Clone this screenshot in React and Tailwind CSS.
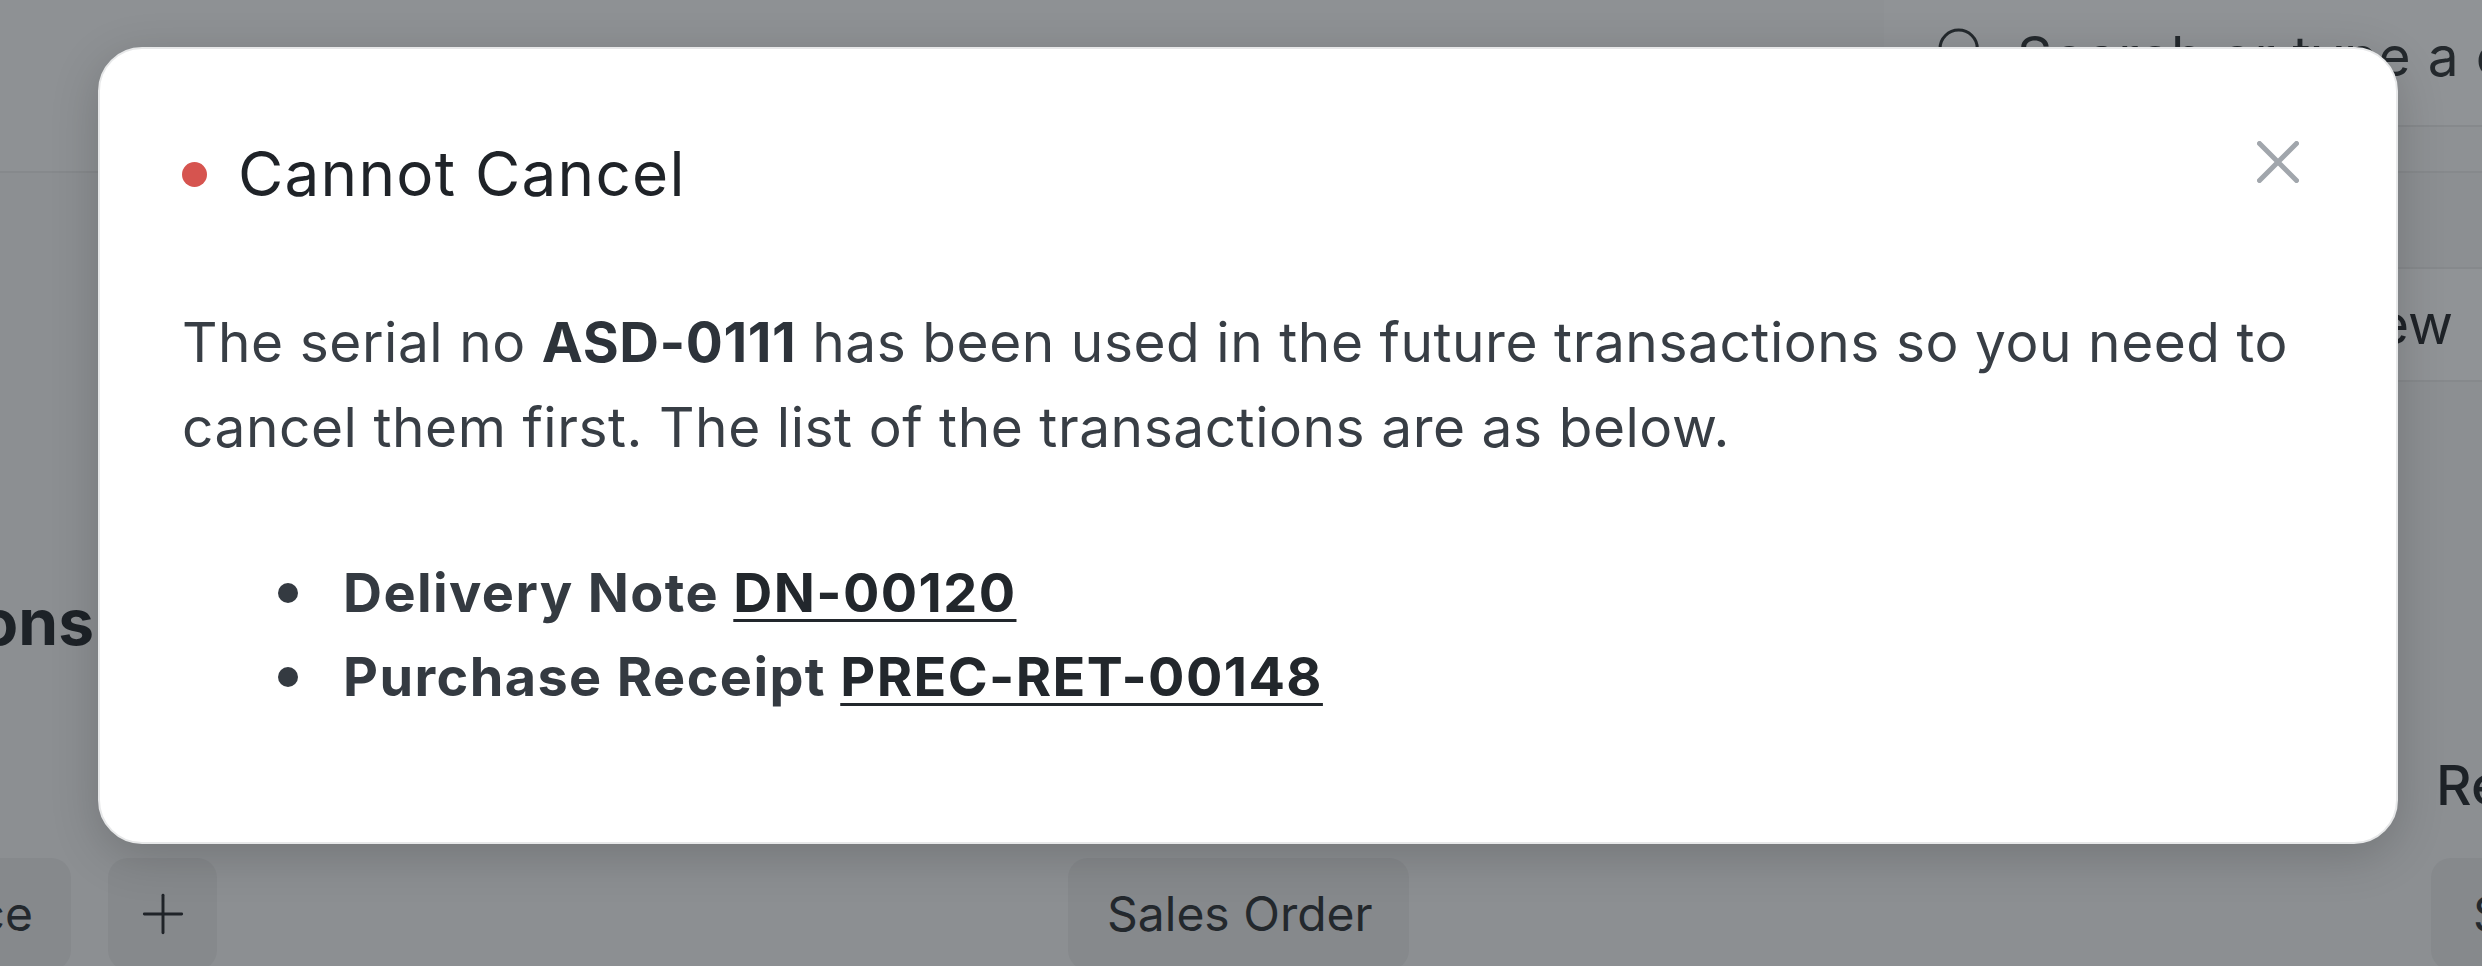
import { Search, Plus } from "lucide-react";

const CloseIcon = () => (
  <svg width="42" height="42" viewBox="0 0 42 42" fill="none">
    <path
      d="M2.5 2.5 39.5 39.5M39.5 2.5 2.5 39.5"
      stroke="#a1a6ac"
      strokeWidth="5"
      strokeLinecap="round"
    />
  </svg>
);

const BgButton = ({ children, className = "" }) => (
  <div
    className={`h-[112px] shrink-0 rounded-[20px] bg-[#86898c] flex items-center text-[48px] text-[#23282d] whitespace-nowrap ${className}`}
  >
    {children}
  </div>
);

const App = () => {
  return (
    <div className="relative h-[966px] w-full overflow-hidden bg-[#8c8f92] font-['Inter','Noto_Sans',sans-serif]">
      {/* page behind the dialog (already dimmed) */}
      <div className="h-[173px] flex justify-end border-b-2 border-[#86898c] bg-[#8e9194]">
        <div className="w-[598px] h-[127px] bg-[#909396] border-b-2 border-[#86898c] flex items-start pt-[23px] pl-[49px] gap-[28px]">
          <Search className="w-[56px] h-[56px] text-[#24292d] shrink-0" strokeWidth={1.3} />
          <span className="text-[55px] leading-[66px] tracking-[0.015em] text-[#24292d] whitespace-nowrap">
            Search or type a command
          </span>
        </div>
      </div>

      <div className="flex justify-end mt-[94px]">
        <div className="w-[240px] h-[115px] rounded-l-[20px] bg-[#909396] border-2 border-r-0 border-[#86898c] flex items-center justify-end pr-[29px] text-[55px] text-[#1f2328]">
          New
        </div>
      </div>

      <div className="grid grid-cols-[1068px_1363px_1fr]">
        {/* left column */}
        <div className="pt-[201px]">
          <div className="w-[94px] overflow-hidden flex justify-end">
            <span className="shrink-0 whitespace-nowrap text-[64px] leading-[77px] font-bold text-[#1d2227]">
              Transactions
            </span>
          </div>
          <div className="flex gap-[37px] mt-[198px]">
            <div className="w-[71px] overflow-hidden flex justify-end">
              <BgButton className="pl-[40px] pr-[38px]">Sales Invoice</BgButton>
            </div>
            <BgButton className="w-[109px] justify-center">
              <Plus className="w-[64px] h-[64px] text-[#1f2328]" strokeWidth={1.1} />
            </BgButton>
          </div>
        </div>

        {/* middle column */}
        <div className="pt-[476px]">
          <BgButton className="w-[341px] pl-[39px]">Sales Order</BgButton>
        </div>

        {/* right column */}
        <div className="pt-[370px] overflow-hidden">
          <div className="whitespace-nowrap text-[55px] leading-[66px] font-medium text-[#1d2227] pl-[5px]">
            Reports
          </div>
          <div className="mt-[40px]">
            <BgButton className="w-[300px] pl-[42px]">Stock Ledger</BgButton>
          </div>
        </div>
      </div>

      {/* dialog */}
      <div className="absolute inset-0 pl-[98px] pt-[47px]">
        <div className="relative w-[2300px] bg-white rounded-[44px] border-2 border-[#e7e8e9] shadow-[0_12px_48px_rgba(0,0,0,0.18)] pt-[88px] px-[82px] pb-[123px]">
          <button className="absolute top-[92px] right-[97px]">
            <CloseIcon />
          </button>

          <div className="flex items-center gap-[31px]">
            <span className="w-[25px] h-[25px] rounded-full bg-[#d6544f] shrink-0" />
            <h2 className="text-[62px] leading-[74px] tracking-[0.02em] text-[#1f2328]">
              Cannot Cancel
            </h2>
          </div>

          <p className="mt-[89px] text-[55px] leading-[85px] tracking-[0.01em] text-[#383e45]">
            The serial no <strong className="font-bold text-[#2d333a]">ASD-0111</strong> has
            been used in the future transactions so you need to cancel them first. The list
            of the transactions are as below.
          </p>

          <ul className="mt-[81px] text-[54px] leading-[84px] tracking-[0.026em] font-bold text-[#343a41]">
            {[
              ["Delivery Note", "DN-00120"],
              ["Purchase Receipt", "PREC-RET-00148"],
            ].map(([doctype, name]) => (
              <li key={name} className="flex items-center gap-[45px] pl-[96px]">
                <span className="w-[20px] h-[20px] rounded-full bg-[#343a41] shrink-0" />
                <span>
                  {doctype}{" "}
                  <a className="underline decoration-[3px] underline-offset-[7px] text-[#22272c]">
                    {name}
                  </a>
                </span>
              </li>
            ))}
          </ul>
        </div>
      </div>
    </div>
  );
};

export default App;
